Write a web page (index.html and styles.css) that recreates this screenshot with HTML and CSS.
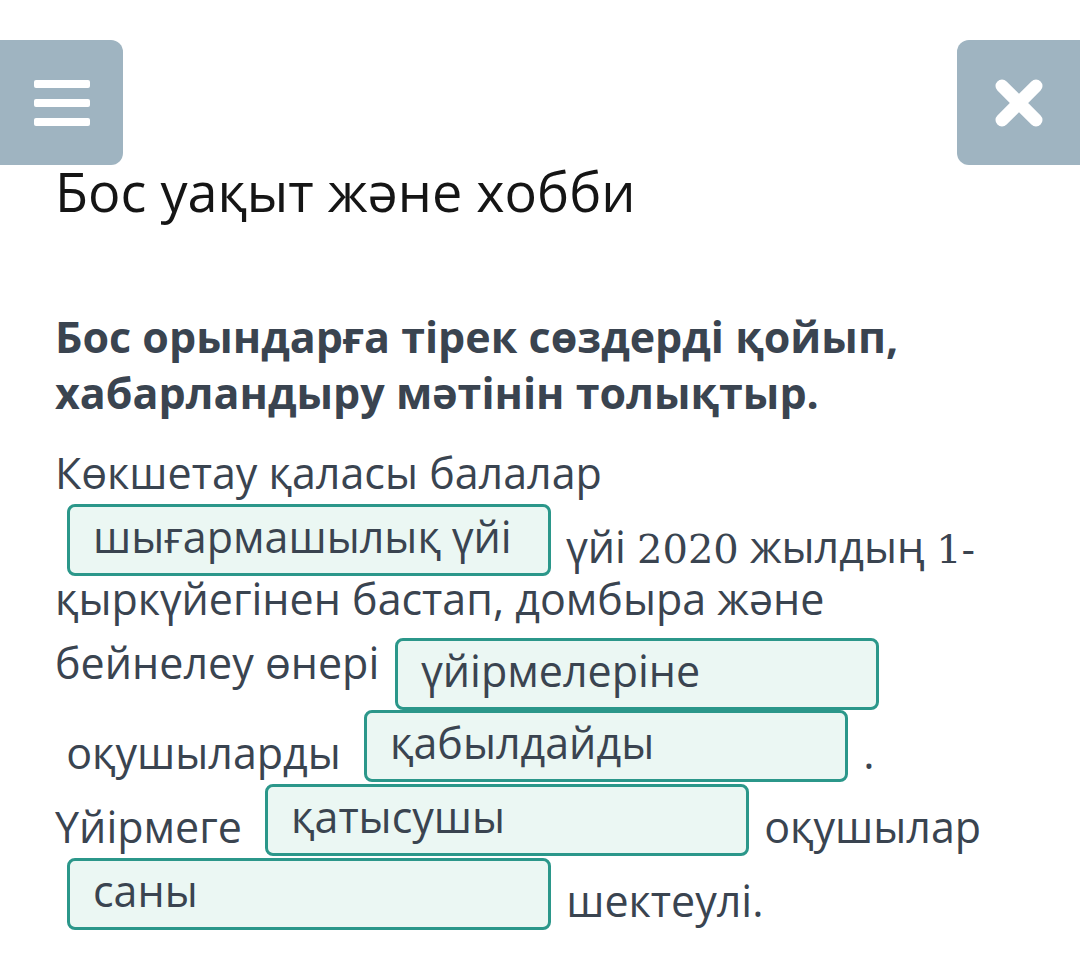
FILE: index.html
```html
<!DOCTYPE html>
<html lang="kk">
<head>
<meta charset="utf-8">
<title>Бос уақыт және хобби</title>
<link rel="stylesheet" href="styles.css">
</head>
<body>
<button class="fab fab-menu" aria-label="Мәзір">
  <span class="bar"></span><span class="bar"></span><span class="bar"></span>
</button>
<button class="fab fab-close" aria-label="Жабу">
  <svg width="60" height="60" viewBox="0 0 60 60"><path d="M13 13 L47 47 M47 13 L13 47" stroke="#fff" stroke-width="13" stroke-linecap="round" fill="none"/></svg>
</button>
<main class="page">
  <h1 class="title">Бос уақыт және хобби</h1>
  <p class="task">Бос орындарға тірек сөздерді қойып, хабарландыру мәтінін толықтыр.</p>
  <p class="text">Көкшетау қаласы балалар <span class="blank">шығармашылық үйі</span> үйі <span class="num">2020</span> жылдың <span class="num">1-</span>қыркүйегінен бастап, домбыра және бейнелеу өнері<span class="blank blank-low">үйірмелеріне</span> &nbsp;оқушыларды <span class="blank">қабылдайды</span> . Үйірмеге <span class="blank">қатысушы</span> оқушылар <span class="blank">саны</span> шектеулі.</p>
</main>
</body>
</html>
```
FILE: styles.css
```css
html, body {
  margin: 0;
  padding: 0;
  background: #ffffff;
}
body {
  font-family: "Open Sans", "Noto Sans", sans-serif;
  color: #3a4450;
  min-height: 979px;
}
.page {
  padding: 153px 55px 40px 55px;
}
.title {
  margin: 0;
  font-size: 54px;
  font-weight: 400;
  line-height: 76px;
  color: #151515;
}
.task {
  margin: 80px 0 0 0;
  font-size: 43px;
  font-weight: 700;
  line-height: 56px;
  color: #3a4450;
}
.text {
  margin: 27px 0 0 0;
  padding-bottom: 10px;
  font-size: 43px;
  line-height: 50px;
}
.num {
  font-family: "DejaVu Serif", serif;
  font-size: 40px;
}
.blank {
  display: inline-block;
  box-sizing: border-box;
  width: 484px;
  height: 72px;
  padding: 2px 23px 8px 23px;
  margin: 6px 4px -4px 12px;
  border: 3px solid #2b978a;
  border-radius: 8px;
  background: #ebf7f3;
  color: #3a4450;
  line-height: 56px;
  vertical-align: 10px;
}
.blank-low {
  vertical-align: -8px;
  margin-top: 14px;
  margin-bottom: -6px;
  margin-left: 16px;
}
.fab {
  position: absolute;
  top: 40px;
  height: 125px;
  border: none;
  border-radius: 12px;
  background: #9fb4c1;
  padding: 0;
  display: flex;
  flex-direction: column;
  align-items: center;
  justify-content: center;
}
.fab-menu {
  left: -12px;
  width: 135px;
  gap: 11px;
  padding-left: 12px;
}
.bar {
  display: block;
  width: 56px;
  height: 8px;
  border-radius: 2px;
  background: #ffffff;
}
.fab-close {
  left: 957px;
  width: 135px;
  padding-right: 12px;
}
.fab-close svg {
  display: block;
}
```
